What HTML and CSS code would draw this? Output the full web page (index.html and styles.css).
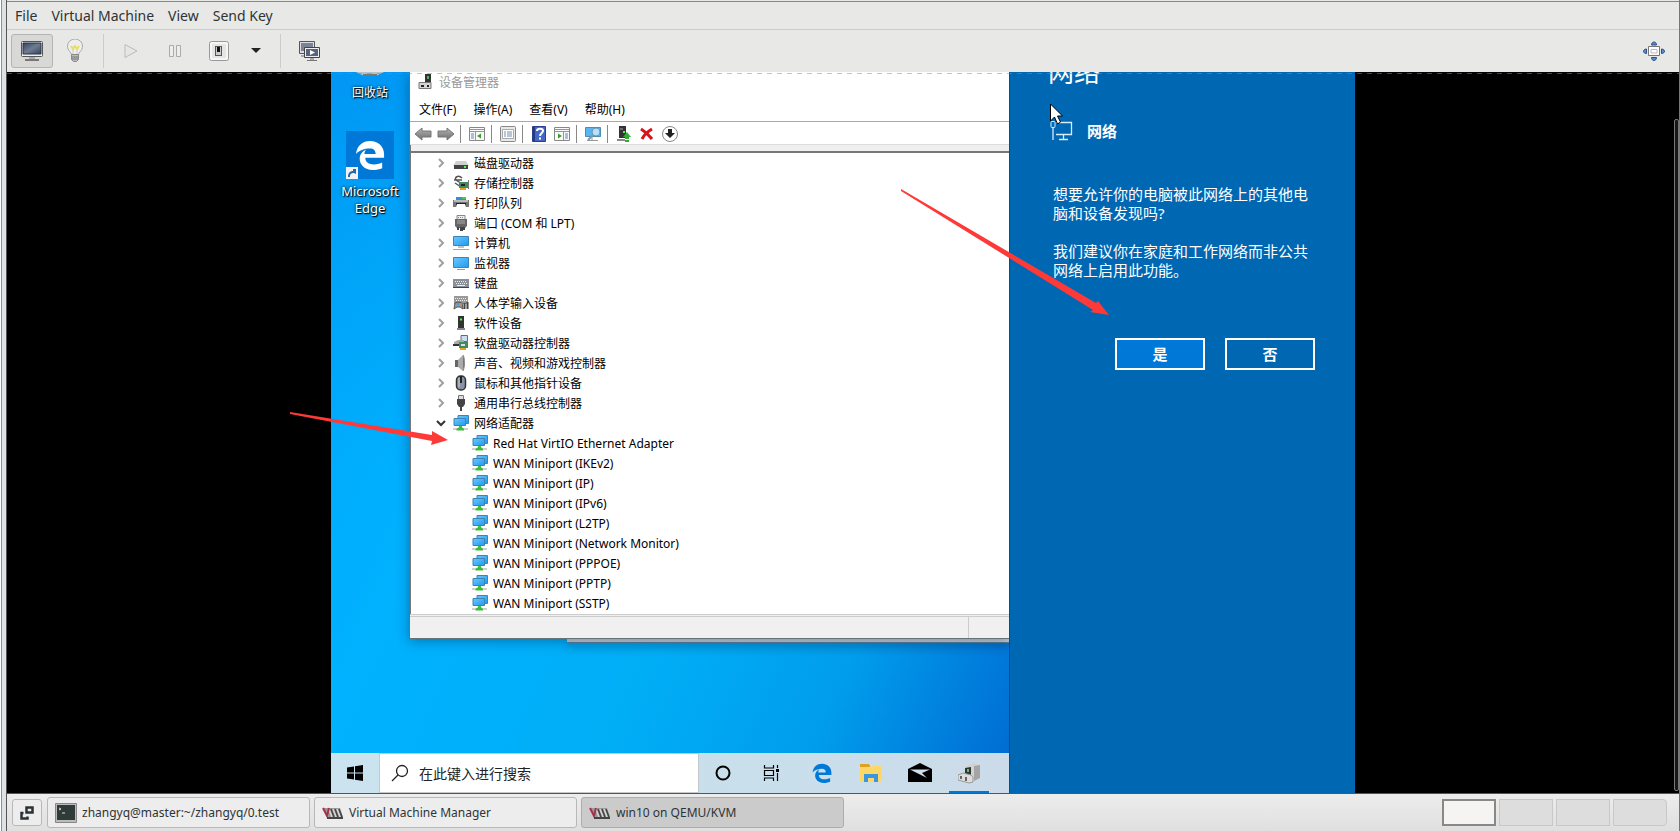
FILE: index.html
```html
<!DOCTYPE html>
<html lang="zh-CN">
<head>
<meta charset="utf-8">
<title>win10 on QEMU/KVM</title>
<link rel="stylesheet" href="styles.css">
</head>
<body>
<svg class="defs" aria-hidden="true">
  <defs>
    <linearGradient id="scr" x1="0" y1="0" x2="1" y2="1"><stop offset="0" stop-color="#6cc8ff"/><stop offset="1" stop-color="#1e9af0"/></linearGradient>
    <linearGradient id="slate" x1="0" y1="0" x2="1" y2="1"><stop offset="0" stop-color="#34425c"/><stop offset=".5" stop-color="#6f7d93"/><stop offset="1" stop-color="#34425c"/></linearGradient>
    <linearGradient id="met" x1="0" y1="0" x2="0" y2="1"><stop offset="0" stop-color="#b5b5b5"/><stop offset="1" stop-color="#6c6c6c"/></linearGradient>
  </defs>
  <symbol id="chev" viewBox="0 0 10 12"><path d="M3 2l4 4-4 4" fill="none" stroke="#a0a0a0" stroke-width="2"/></symbol>
  <symbol id="chev-open" viewBox="0 0 10 12"><path d="M1 4l4 4 4-4" fill="none" stroke="#333" stroke-width="2"/></symbol>
  <symbol id="net" viewBox="0 0 16 16"><path d="M5 .5h10.500v8H5z" fill="url(#scr)" stroke="#3c84b4"/><path d="M1 3.500h11.500v7H1z" fill="url(#scr)" stroke="#3c84b4"/><path d="M6 11h3v2H6z" fill="#45c045"/><path d="M0 14h15" stroke="#d0d0d0" stroke-width="2"/><path d="M5.500 12.500h4l1.500 1.500v1.500H3.500V14z" fill="#3cba3c"/></symbol>
  <symbol id="vmm" viewBox="0 0 22 14"><path d="M1 2h17l3 9-1 1H6z" fill="#9a9a9a"/><path d="M7 3l3 8M11 3l3 8M15 3l3 8" stroke="#d5d5d5" stroke-width="1.500"/><path d="M9 3l3 8M13 3l3 8M17 3l3 8" stroke="#444" stroke-width="1.500"/><path d="M1 2l4 8 2-8" fill="none" stroke="#a5344b" stroke-width="2"/><path d="M5 12h16" stroke="#444" stroke-width="2"/></symbol>
  <symbol id="edge" viewBox="0 0 32 32"><path d="M1 15C2 6 8 1 16 1c9 0 15 6 15 14v4H11c0 5 4 7 9 7 4 0 7-1 9-2v6c-3 1-6 2-10 2C10 32 5 26 5 20c0-5 3-8 7-10-1 1-2 3-2 5h12c0-4-2-6-6-6-6 0-12 2-15 6z"/></symbol>
</svg>

<div class="page">
  <div class="backdrop"></div>
  <main class="window">
    <nav class="menubar">
      <button>File</button><button>Virtual Machine</button><button>View</button><button>Send Key</button>
    </nav>
    <div class="toolbar">
      <button class="tool pressed" aria-label="Console"><svg width="24" height="22" viewBox="0 0 24 22"><rect x="1.500" y="1.500" width="21" height="15" rx="1" fill="#eee" stroke="#555"/><path d="M3 3h18v11H3z" fill="url(#slate)" stroke="#283449"/><path d="M9 17h6v2H9z" fill="#aaa"/><path d="M5 19h14v2H5z" fill="#777"/></svg></button>
      <button class="tool" aria-label="Details"><svg width="18" height="24" viewBox="0 0 18 24"><path d="M5.500 16c0-3-4-4-4-9a7.500 7 0 0 1 15 0c0 5-4 6-4 9z" fill="#eee" stroke="#aaa"/><path d="M5 7l2 3 2-3 2 3 2-3" fill="none" stroke="#e7df62" stroke-width="2"/><path d="M7 10v6M11 10v6" stroke="#ccc"/><path d="M5.500 15.500h7v5l-2 2h-3l-2-2z" fill="#bbb" stroke="#888"/><path d="M6 18h6M6 20h6" stroke="#777"/></svg></button>
      <i class="sep"></i>
      <button class="tool" aria-label="Run"><svg width="16" height="18" viewBox="0 0 16 18"><path d="M2 2.500l12 6.500-12 6.500z" fill="#e6e6e4" stroke="#bbb"/></svg></button>
      <button class="tool" aria-label="Pause"><svg width="16" height="16" viewBox="0 0 16 16"><path d="M2.500 2.500h4v11h-4zM9.500 2.500h4v11h-4z" fill="#eee" stroke="#aaa"/></svg></button>
      <button class="tool" aria-label="Shut Down"><svg width="22" height="22" viewBox="0 0 22 22"><rect x="1.500" y="1.500" width="19" height="19" rx="2" fill="#f6f6f6" stroke="#999"/><path d="M4 4h14v14H4z" fill="#e5e5e5"/><rect x="7.500" y="6.500" width="6" height="9" fill="#ccc" stroke="#555"/><path d="M9 7h3v5H9z" fill="#111"/></svg></button>
      <button class="tool narrow" aria-label="Shut down menu"><svg width="10" height="6" viewBox="0 0 10 6"><path d="M0 0h10L5 5z" fill="#222"/></svg></button>
      <i class="sep wide"></i>
      <button class="tool" aria-label="Snapshots"><svg width="22" height="22" viewBox="0 0 22 22"><path d="M1.500 1.500h15v12h-15z" fill="#ddd" stroke="#555"/><path d="M3 3h12v8H3z" fill="#7b8496"/><path d="M3 15h6v2H3z" fill="#aaa"/><path d="M6.500 7.500h15v10h-15z" fill="#eee" stroke="#444"/><path d="M8 9h12v7H8z" fill="#56657d"/><path d="M12 10l5 2.500-5 2.500z" fill="#fff"/><path d="M12 18h4v2h-4z" fill="#aaa"/><path d="M9 20.500h10" stroke="#777"/></svg></button>
      <button class="tool full" aria-label="Full screen"><svg width="22" height="20" viewBox="0 0 22 20"><g fill="#5f8cc4" stroke="#2c4f8a"><path d="M8.500 4c0-4 5-4 5 0zM8.500 16.500c0 4 5 4 5 0zM3.500 8c-4 0-4 4.500 0 4.500zM18.500 8c4 0 4 4.500 0 4.500z"/></g><path d="M5.500 5.500h11v9h-11z" fill="#fff" stroke="#777"/><path d="M8 8.500h6v3.500H8z" fill="none" stroke="#bbb"/></svg></button>
    </div>

    <section class="console">
      <div class="guest">
        <div class="screen">
          <div class="desktop">
            <div class="icons">
              <div class="bin"><svg width="34" height="5" viewBox="0 0 34 5"><path d="M3 0h28l-8 4h-12z" fill="#b8c2cb"/><path d="M10 3h14" stroke="#777" stroke-width="2"/></svg><span>回收站</span></div>
              <div class="shortcut"><div class="tile"><svg width="30" height="32" fill="#fff"><use href="#edge"/></svg><svg class="link" width="12" height="12" viewBox="0 0 12 12"><path d="M0 0h12v12H0z" fill="#f2f2f2"/><path d="M2 10c0-4 2-6 5-6V2h3v5L8 6C5 6 4 7 4 10z" fill="#2668b0"/></svg></div><span>Microsoft<br>Edge</span></div>
            </div>

            <div class="windows">
              <div class="devmgr">
                <header class="title"><svg width="14" height="16" viewBox="0 0 14 16"><path d="M7 0h6v9H7z" fill="#333"/><path d="M9 2h2v3H9z" fill="#49b35b"/><path d="M1 8.500h12v6H1z" fill="#d5d5d5" stroke="#777"/><path d="M3 11h3v2H3zM9 11h2v2H9z" fill="#222"/></svg>设备管理器</header>
                <nav class="wmenu"><button>文件(F)</button><button>操作(A)</button><button>查看(V)</button><button>帮助(H)</button></nav>
                <div class="wtools">
                  <button aria-label="后退"><svg width="18" height="14" viewBox="0 0 18 14"><path d="M1 7l7-6v3h9v6H8v3z" fill="url(#met)" stroke="#777"/></svg></button>
                  <button aria-label="前进"><svg width="18" height="14" viewBox="0 0 18 14"><path d="M17 7l-7-6v3H1v6h9v3z" fill="url(#met)" stroke="#777"/></svg></button>
                  <i></i>
                  <button aria-label="显示控制台树"><svg width="16" height="14" viewBox="0 0 16 14"><path d="M.5.5h15v13H.5z" fill="#fafafa" stroke="#888"/><path d="M1 2.500h14M1 4.500h14M6.500 5v8" stroke="#8a97a8"/><path d="M2 7h3M2 9h3M2 11h3" stroke="#5587c9"/><path d="M12 6.500v5L8 9z" fill="#35a02c"/></svg></button>
                  <i></i>
                  <button aria-label="属性"><svg width="16" height="16" viewBox="0 0 16 16"><rect x=".5" y=".5" width="15" height="15" rx="1" fill="#e8e8e8" stroke="#888"/><path d="M2.500 3.500h11v9h-11z" fill="#fff" stroke="#aaa"/><path d="M4 6h2M7 6h5M4 8h2M7 8h5M4 10h2M7 10h5" stroke="#6d8fae"/></svg></button>
                  <i></i>
                  <button aria-label="帮助"><svg width="14" height="16" viewBox="0 0 14 16"><path d="M.5.5h13v15H.5z" fill="#4767c4" stroke="#293f8c"/><path d="M1 1h2v14H1z" fill="#263b86"/><path d="M5 5c0-3 6-3 6 0 0 2-3 2-3 5M8 11.500v2" fill="none" stroke="#fff" stroke-width="2"/></svg></button>
                  <button aria-label="操作窗格"><svg width="16" height="14" viewBox="0 0 16 14"><path d="M.5.5h15v13H.5z" fill="#fafafa" stroke="#888"/><path d="M1 2.500h14M1 4.500h14M9.500 5v8" stroke="#8a97a8"/><path d="M11 7h3M11 9h3M11 11h3" stroke="#5587c9"/><path d="M4 6.500v5L8 9z" fill="#35a02c"/></svg></button>
                  <i></i>
                  <button aria-label="扫描硬件改动"><svg width="18" height="16" viewBox="0 0 18 16"><path d="M1.500 1.500h15v9h-15z" fill="#58b5ee" stroke="#4b8cb9"/><path d="M8 11v3M3 14.500h11" stroke="#999"/><circle cx="12" cy="6" r="4" fill="#b4e2fb" stroke="#6e96b0"/><path d="M9 9l-5 5" stroke="#7d98aa" stroke-width="2"/></svg></button>
                  <i></i>
                  <button aria-label="更新驱动程序"><svg width="14" height="16" viewBox="0 0 14 16"><path d="M2 0h7v12H2z" fill="#333"/><path d="M3 3h3" stroke="#aaa"/><path d="M6 5h2v2H6z" fill="#4f4"/><path d="M0 14h8" stroke="#888" stroke-width="2"/><path d="M10 6l4 5h-2v2H8v-2H6zM8 14h4v2H8z" fill="#2fae35"/></svg></button>
                  <button aria-label="卸载设备"><svg width="14" height="14" viewBox="0 0 14 14"><path d="M1 2c5 3 8 6 11 10M12 2C7 5 4 8 2 12" fill="none" stroke="#d9121c" stroke-width="3"/></svg></button>
                  <button aria-label="禁用设备"><svg width="16" height="16" viewBox="0 0 16 16"><circle cx="8" cy="8" r="7.500" fill="#fff" stroke="#888"/><path d="M6 3h4v4h3l-5 5-5-5h3z" fill="#222"/></svg></button>
                </div>
                <ul class="tree">
                  <li><svg class="ch"><use href="#chev"/></svg><svg class="ic" viewBox="0 0 16 16"><path d="M3 6h10l3 5H0z" fill="#d0d0d0"/><path d="M1 10h14v4H1z" fill="#444"/><path d="M11 12h2" stroke="#4f4" stroke-width="2"/></svg>磁盘驱动器</li>
                  <li><svg class="ch"><use href="#chev"/></svg><svg class="ic" viewBox="0 0 16 16"><path d="M9 3C5-1 1 3 3 5l6 4M1 5h8M2 8l6 4" fill="none" stroke="#555" stroke-width="1.500"/><path d="M6 7h9v6H6z" fill="#3d8b5f"/><path d="M8 9h4v2H8z" fill="#222"/><path d="M7 14h6" stroke="#e8a020" stroke-width="2"/><path d="M15.500 5v9" stroke="#777"/></svg>存储控制器</li>
                  <li><svg class="ch"><use href="#chev"/></svg><svg class="ic" viewBox="0 0 16 16"><path d="M3 2h10v3H3z" fill="#2f8fd8"/><path d="M9 2h4v2H9z" fill="#4cc658"/><path d="M0 5h16v7H0z" fill="#777"/><path d="M1 5h14v2H1z" fill="#bbb"/><path d="M3 8h10v2H3z" fill="#222"/><path d="M4 9h8l1 4H3z" fill="#fff"/></svg>打印队列</li>
                  <li><svg class="ch"><use href="#chev"/></svg><svg class="ic" viewBox="0 0 16 16"><path d="M4 .5h8v4H4z" fill="#eee" stroke="#888"/><path d="M5 2.500h6" stroke="#888" stroke-dasharray="1 1"/><path d="M2 4h12v7l-2 2H4l-2-2z" fill="#666"/><path d="M4 6h8M4 8h8" stroke="#aaa"/><path d="M4 12h2v3H4zM10 12h2v3h-2zM7 12h3v4H7z" fill="#444"/></svg>端口 (COM 和 LPT)</li>
                  <li><svg class="ch"><use href="#chev"/></svg><svg class="ic" viewBox="0 0 16 16"><path d="M.5 1.500h15v9H.5z" fill="url(#scr)" stroke="#3c84b4"/><path d="M5 12h6" stroke="#888"/><path d="M0 14.500h16" stroke="#8eabc0"/></svg>计算机</li>
                  <li><svg class="ch"><use href="#chev"/></svg><svg class="ic" viewBox="0 0 16 16"><path d="M.5 2.500h15v10H.5z" fill="url(#scr)" stroke="#3c84b4"/><path d="M4 14.500h8" stroke="#999"/></svg>监视器</li>
                  <li><svg class="ch"><use href="#chev"/></svg><svg class="ic" viewBox="0 0 16 16"><path d="M0 4h16v9H0z" fill="#8b8f98"/><path d="M0 12h16v1H0z" fill="#444"/><path d="M2 6.500h12M3 8.500h11" stroke="#eee" stroke-dasharray="1 1"/><path d="M4 10.500h8" stroke="#eee"/></svg>键盘</li>
                  <li><svg class="ch"><use href="#chev"/></svg><svg class="ic" viewBox="0 0 16 16"><path d="M1 1h14v8H1z" fill="#999"/><path d="M2 3.500h12M3 5.500h11" stroke="#eee" stroke-dasharray="1 1"/><path d="M1 14l1-6 3-1 4 1 1 6-3-2H4z" fill="#8d9bab" stroke="#555"/><circle cx="5" cy="9" r="1" fill="#28a0ed"/><circle cx="8" cy="9" r="1" fill="#d84"/><path d="M11.500 8v6M14.500 7v7" stroke="#444" stroke-width="2"/></svg>人体学输入设备</li>
                  <li><svg class="ch"><use href="#chev"/></svg><svg class="ic" viewBox="0 0 16 16"><path d="M5 1h6v13H5z" fill="#333"/><path d="M4 14h8" stroke="#888" stroke-width="2"/><path d="M7 4.500h2" stroke="#4f4" stroke-width="2"/></svg>软件设备</li>
                  <li><svg class="ch"><use href="#chev"/></svg><svg class="ic" viewBox="0 0 16 16"><path d="M8 .5h6.500v6H8z" fill="#c9dff0" stroke="#668"/><path d="M1 7l4-2h6v6H1z" fill="#aaa"/><path d="M0 9h6v2H0z" fill="#333"/><path d="M6 7h9v6H6z" fill="#3d8b5f"/><path d="M8 9h4v2H8z" fill="#ddd"/><path d="M7 14h6" stroke="#e8a020" stroke-width="2"/></svg>软盘驱动器控制器</li>
                  <li><svg class="ch"><use href="#chev"/></svg><svg class="ic" viewBox="0 0 16 16"><path d="M2 5h3v7H2z" fill="#666"/><path d="M5 5l5-5v16l-5-4z" fill="#aaa"/><path d="M10 0c2 3 2 12 0 16" fill="#777" stroke="#888"/></svg>声音、视频和游戏控制器</li>
                  <li><svg class="ch"><use href="#chev"/></svg><svg class="ic" viewBox="0 0 16 16"><rect x="3.500" y="1" width="9" height="14" rx="4" fill="#8894a5" stroke="#333" stroke-width="1.500"/><path d="M8 1v7" stroke="#222" stroke-width="2"/><path d="M6 3v9" stroke="#c5ccd5"/></svg>鼠标和其他指针设备</li>
                  <li><svg class="ch"><use href="#chev"/></svg><svg class="ic" viewBox="0 0 16 16"><path d="M5.500.5h5v4h-5z" fill="#ddd" stroke="#777"/><path d="M4 4h8v5l-2 3H6L4 9z" fill="#444"/><path d="M8 11v5" stroke="#444" stroke-width="2"/></svg>通用串行总线控制器</li>
                  <li><svg class="ch"><use href="#chev-open"/></svg><svg class="ic"><use href="#net"/></svg>网络适配器</li>
                  <li class="child"><svg class="ic"><use href="#net"/></svg>Red Hat VirtIO Ethernet Adapter</li>
                  <li class="child"><svg class="ic"><use href="#net"/></svg>WAN Miniport (IKEv2)</li>
                  <li class="child"><svg class="ic"><use href="#net"/></svg>WAN Miniport (IP)</li>
                  <li class="child"><svg class="ic"><use href="#net"/></svg>WAN Miniport (IPv6)</li>
                  <li class="child"><svg class="ic"><use href="#net"/></svg>WAN Miniport (L2TP)</li>
                  <li class="child"><svg class="ic"><use href="#net"/></svg>WAN Miniport (Network Monitor)</li>
                  <li class="child"><svg class="ic"><use href="#net"/></svg>WAN Miniport (PPPOE)</li>
                  <li class="child"><svg class="ic"><use href="#net"/></svg>WAN Miniport (PPTP)</li>
                  <li class="child"><svg class="ic"><use href="#net"/></svg>WAN Miniport (SSTP)</li>
                </ul>
                <footer class="status"><span></span></footer>
              </div>
              <div class="behind"></div>
            </div>
          </div>

          <div class="wbar">
            <button class="start" aria-label="开始"><svg width="16" height="16" viewBox="0 0 16 16"><path d="M0 2.500l7-1v6H0zM8 1.300L16 0v7.500H8zM0 8.500h7v6l-7-1zM8 8.500h8V16l-8-1.300z"/></svg></button>
            <label class="search"><svg width="18" height="18" viewBox="0 0 18 18"><circle cx="11" cy="7" r="5.500" fill="none" stroke="#222" stroke-width="1.300"/><path d="M7 11l-6 6" stroke="#222" stroke-width="1.300"/></svg><input type="text" placeholder="在此键入进行搜索" aria-label="搜索"></label>
            <button class="sys" aria-label="Cortana"><svg width="16" height="16" viewBox="0 0 16 16"><circle cx="8" cy="8" r="6.500" fill="none" stroke="#000" stroke-width="2"/></svg></button>
            <button class="sys" aria-label="任务视图"><svg width="17" height="16" viewBox="0 0 17 16"><path d="M1.500 0v3h9V0M1.500 16v-3h9v3M1.500 5.500h9v5h-9zM14.500 0v3M14.500 8v8" fill="none" stroke="#000" stroke-width="1.200"/><path d="M13 4h3v3h-3z"/></svg></button>
            <div class="apps">
              <button aria-label="Microsoft Edge"><svg width="20" height="22" fill="#0078d7" viewBox="0 0 32 32"><use href="#edge" width="32" height="32"/></svg></button>
              <button aria-label="文件资源管理器"><svg width="22" height="18" viewBox="0 0 22 18"><path d="M0 0h9l1 2v5H0z" fill="#e0a21c"/><path d="M0 3h10l1-1h11v16H0z" fill="#ffd768"/><path d="M4 18v-8h14v8h-4v-4H8v4z" fill="#3a96dd"/></svg></button>
              <button aria-label="邮件"><svg width="24" height="20" viewBox="0 0 24 20"><path d="M0 6L12 0l12 6v13H0z"/><path d="M2 6.500h20l-8 3.500 5 5-9-4.500z" fill="#cfdfea"/></svg></button>
              <button class="on" aria-label="设备管理器"><svg width="22" height="22" viewBox="0 0 22 22"><path d="M8 4l8-3 6 2v13l-7 3-7-5z" fill="#d2d2d2"/><path d="M16 4l6-1v13l-6 3z" fill="#a5a5a5"/><path d="M7 6l6-1v8H7z" fill="#333"/><path d="M9 7h2v3H9z" fill="#40d35d"/><path d="M0 13l5-2 8 2 2 2v5l-4 1-11-3z" fill="#ddd" stroke="#999"/><path d="M3 14v3M8 15v4" stroke="#666" stroke-width="2"/></svg></button>
            </div>
          </div>
        </div>

        <aside class="flyout">
          <h1>网络</h1>
          <h2><svg width="24" height="20" viewBox="0 0 24 20"><path d="M6 1.500h15.500v12H6M13.500 14v4M9 18.500h9M3 6v13" fill="none" stroke="#d8ecfa" stroke-width="1.300"/><rect x="1" y=".5" width="4" height="6" rx="1" fill="#0067b3" stroke="#d8ecfa"/></svg>网络</h2>
          <p>想要允许你的电脑被此网络上的其他电脑和设备发现吗?</p>
          <p>我们建议你在家庭和工作网络而非公共网络上启用此功能。</p>
          <div class="answers"><button class="yes">是</button><button>否</button></div>
        </aside>

        <svg class="notes" width="1024" height="721" viewBox="0 0 1024 721" aria-hidden="true">
          <g fill="#fd3a37"><path d="M570 117L765 231l2-2 11 14-19-3 3-2L570 119z"/><path d="M-41 340L101 363v-4l16 9-17 5 1-4L-41 342z"/></g>
          <path d="M719.500 32v17l4-4 3 7 3-2-3-6h5z" fill="#fff" stroke="#000"/>
        </svg>
      </div>
      <div class="dash"></div>
      <div class="thumb"></div>
    </section>

    <footer class="panel">
      <button class="show" aria-label="Show desktop"><svg width="14" height="14" viewBox="0 0 14 14"><path d="M6.500 1.500h6v5h-6zM3.500 7H1.500v5.500h6v-2" fill="none" stroke="#2b3236" stroke-width="2.500"/></svg></button>
      <button class="task"><svg width="22" height="20" viewBox="0 0 22 20"><path d="M.5.5h21v19H.5z" fill="#bbb" stroke="#888"/><path d="M2 2h18v15H2z" fill="#2f3b39"/><path d="M4 5l2 1-2 1M7 10h3" fill="none" stroke="#ddd"/></svg>zhangyq@master:~/zhangyq/0.test</button>
      <button class="task"><svg width="22" height="14"><use href="#vmm"/></svg>Virtual Machine Manager</button>
      <button class="task active"><svg width="22" height="14"><use href="#vmm"/></svg>win10 on QEMU/KVM</button>
      <div class="spaces"><button class="cur" aria-label="Workspace 1"></button><button aria-label="Workspace 2"></button><button aria-label="Workspace 3"></button><button class="last" aria-label="Workspace 4"></button></div>
    </footer>
  </main>
</div>
</body>
</html>
```
FILE: styles.css
```css
* { box-sizing: border-box; }
html, body { height: 100%; margin: 0; }
body { font-family: "Noto Sans", "Noto Sans CJK SC", sans-serif; font-size: 13px; color: #2e3436; overflow: hidden; }
button { font: inherit; color: inherit; background: none; border: 0; padding: 0; margin: 0; display: flex; align-items: center; justify-content: center; white-space: nowrap; }
svg { flex: none; display: block; }
.defs { position: absolute; width: 0; height: 0; }

.page { display: flex; height: 100vh; }
.backdrop { flex: none; width: 6px; background: linear-gradient(90deg, #fff 1px, #8d9092 1px 2px, #dfe2e5 2px); }
.window { flex: 1; min-width: 0; display: flex; flex-direction: column; background: #e8e8e6; border-left: 1px solid #555; border-right: 1px solid #777; }

.menubar { flex: none; display: flex; align-items: center; height: 29px; gap: 14px; margin-top: 1px; padding: 0 8px; border-top: 1px solid #888; border-bottom: 1px solid #ccccca; font-size: 14px; }
.toolbar { flex: none; display: flex; align-items: center; height: 42px; padding: 0 3px 0 4px; }
.tool { width: 44px; height: 34px; border: 1px solid transparent; border-radius: 3px; }
.tool.pressed { background: #d8d8d6; border-color: #b5b5b3; width: 42px; }
.tool.narrow { width: 30px; }
.full { margin-left: auto; }
.sep { width: 1px; height: 34px; background: #ccccca; margin: 0 5px 0 6px; }
.sep.wide { margin: 0 6px 0 9px; }

.console { flex: 1; min-height: 0; position: relative; display: flex; justify-content: center; background: #000; overflow: hidden; border-bottom: 1px solid #555; }
.guest { position: relative; display: flex; width: 1024px; max-width: 100%; }
.screen { flex: 1; min-width: 0; display: flex; flex-direction: column; }
.desktop { flex: 1; min-height: 0; display: flex; overflow: hidden; background: linear-gradient(170deg, rgba(0,148,242,.8) 0, rgba(0,160,245,.5) 25%, rgba(0,176,255,0) 50%), linear-gradient(115deg, #00a4fb 0, #00b2ff 30%, #00aef6 60%, #009dec 80%, #006dd4 100%); }
.icons { flex: none; width: 78px; display: flex; flex-direction: column; gap: 28px; align-items: center; color: #fff; font-size: 12px; line-height: 17px; text-align: center; text-shadow: 1px 1px 1px #000, 0 0 3px #000; }
.bin { display: flex; flex-direction: column; align-items: center; gap: 7px; }
.shortcut { display: flex; flex-direction: column; align-items: center; gap: 4px; font-size: 13px; }
.tile { position: relative; display: flex; align-items: center; justify-content: center; width: 48px; height: 48px; background: #0078d7; margin-top: 2px; }
.link { position: absolute; left: 0; bottom: 0; }
.windows { flex: 1; min-width: 0; display: flex; flex-direction: column; }
.behind { height: 4px; margin-left: 158px; background: #c9cccf; border-bottom: 1px solid #56809a; box-shadow: 0 4px 8px rgba(0,30,70,.3); }

.devmgr { position: relative; background: #fff; color: #000; font-size: 12px; border-left: 1px solid #4a7896; border-bottom: 1px solid #66727a; box-shadow: 0 2px 12px rgba(0,30,70,.4); }
.title { display: flex; align-items: center; gap: 7px; height: 20px; padding-left: 8px; color: #999; }
.wmenu { display: flex; align-items: center; gap: 17px; height: 29px; padding: 4px 9px 0; }
.wtools { display: flex; align-items: center; height: 24px; padding: 1px 0 0 1px; border-top: 1px solid #a8a8ae; border-bottom: 1px solid #ddd; }
.wtools button { width: 23px; }
.wtools i { width: 1px; height: 18px; margin: 0 4px 0 3px; background: #888; }
.tree { list-style: none; margin: 0; padding: 0 0 1px; border-left: 1px solid #777; }
.tree::before { content: ""; display: block; height: 6px; background: #efefef; border-bottom: 2px solid #777; }
.tree li { display: flex; align-items: center; height: 20px; padding-left: 25px; white-space: nowrap; }
.tree .child { padding-left: 61px; }
.ch { width: 10px; height: 12px; margin-right: 7px; }
.ic { width: 16px; height: 16px; margin-right: 5px; }
.status { height: 24px; border-top: 3px double #ccc; background: #f0f0f0; display: flex; justify-content: flex-end; }
.status span { width: 41px; border-left: 1px solid #ccc; }

.wbar { flex: none; display: flex; height: 40px; background: linear-gradient(90deg, #cae3ee, #c8e0ec 50%, #ccdbe9); }
.start { width: 48px; }
.search { flex: 1; min-width: 0; display: flex; align-items: center; gap: 10px; padding-left: 11px; background: #fff; border: 1px solid #c5c9cc; }
.search input { flex: 1; min-width: 0; border: 0; outline: 0; padding: 0; background: none; font: inherit; font-size: 14px; }
.search input::placeholder { color: #222; opacity: 1; }
.sys { width: 48px; }
.apps { display: flex; padding: 0 16px 0 2px; }
.apps button { width: 49px; }
.apps .on { background: linear-gradient(#0078d7, #0078d7) center bottom / 40px 2px no-repeat; }

.flyout { flex: none; width: 346px; padding: 0 40px 0 43px; overflow: hidden; background: #0067b3; border-left: 1px solid #00508c; color: #fff; font-size: 15px; line-height: 19px; }
.flyout h1 { margin: -17px 0 0 -5px; font-size: 26px; font-weight: 400; line-height: 34px; }
.flyout h2 { display: flex; align-items: center; gap: 13px; margin: 31px 0 43px -3px; font-size: 15px; line-height: 22px; }
.flyout p { margin: 0 -2px 19px 0; }
.answers { display: flex; gap: 20px; justify-content: flex-end; margin-top: 58px; }
.answers button { width: 90px; height: 32px; border: 2px solid #fff; font-weight: 700; }
.answers .yes { background: #0078d7; }

.notes { position: absolute; left: 0; top: 0; overflow: visible; }
.dash { position: absolute; left: 0; right: 0; top: 1px; height: 1px; background: repeating-linear-gradient(90deg, rgba(136,136,136,.5) 0 5px, transparent 5px 10px); }
.thumb { position: absolute; right: 0; top: 47px; bottom: 2px; width: 5px; border: 1px solid #777; border-radius: 2px; background: #181818; }

.panel { flex: none; display: flex; align-items: center; gap: 4px; height: 37px; padding: 0 12px 0 5px; background: linear-gradient(#ededed, #dfdfdf); font-size: 12px; }
.show, .task { border: 1px solid #b8b8b8; border-radius: 3px; background: #ededed; }
.show { width: 30px; height: 27px; margin-right: 1px; }
.task { width: 263px; height: 31px; justify-content: flex-start; gap: 5px; padding: 0 7px; }
.task.active { background: #cbcbcb; border-color: #adadad; }
.spaces { display: flex; gap: 3px; margin-left: auto; }
.spaces button { width: 54px; height: 27px; background: #ddd; border: 1px solid #c8c8c8; }
.spaces .cur { background: #f5f4f2; border: 2px solid #888; }
.spaces .last { border-radius: 0 4px 4px 0; }
```
